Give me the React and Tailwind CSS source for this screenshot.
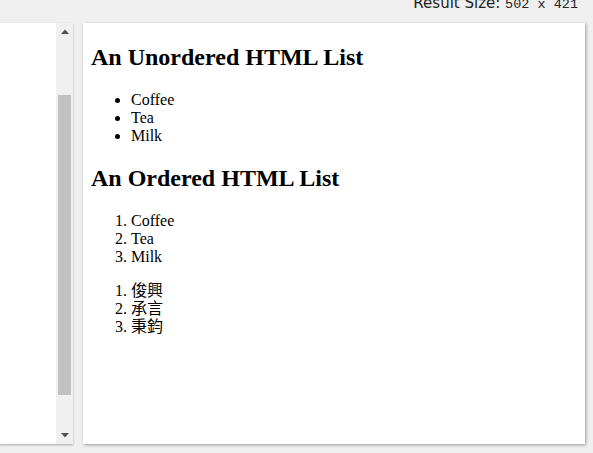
import React from 'react';

const serif = { fontFamily: '"Liberation Serif", "Noto Sans CJK TC", serif' };

const App = () => {
    return (
        <div className="w-[593px] h-[453px] bg-[#efefef] overflow-hidden flex flex-col">
            {/* top bar */}
            <div className="h-[23px] flex justify-end pr-[15px] overflow-hidden">
                <div className="-mt-[5px] text-[15px] leading-[16px] text-[#222] whitespace-pre" style={{ fontFamily: '"DejaVu Sans", sans-serif' }}>
                    Result Size: <span className="text-[13.5px]" style={{ fontFamily: '"Liberation Mono", monospace' }}>502 x 421</span>
                </div>
            </div>

            <div className="flex h-[421px]">
                {/* left editor pane */}
                <div className="w-[73px] h-full bg-white flex shadow-[0_1px_2px_rgba(0,0,0,0.3)]">
                    <div className="flex-1" />
                    <div className="w-[17px] h-full bg-[#f0f0f0] flex flex-col items-center">
                        <div className="h-[17px] flex items-center justify-center">
                            <svg width="8" height="5" viewBox="0 0 8 5"><path d="M0 5 L4 0.5 L8 5 Z" fill="#505050" /></svg>
                        </div>
                        <div className="h-[55px]" />
                        <div className="w-[13px] h-[300px] bg-[#c1c1c1]" />
                        <div className="flex-1" />
                        <div className="h-[17px] flex items-center justify-center">
                            <svg width="8" height="5" viewBox="0 0 8 5"><path d="M0 0 L8 0 L4 4.5 Z" fill="#505050" /></svg>
                        </div>
                    </div>
                </div>

                {/* result pane */}
                <div className="ml-[10px] w-[502px] h-full bg-white shadow-[1px_1px_3px_rgba(0,0,0,0.35)] px-2 pt-[0.1px] text-black" style={serif}>
                    <h2 className="text-[24px] font-bold leading-[27px] mt-[21px] mb-[19.92px]">An Unordered HTML List</h2>
                    <ul className="list-disc pl-10 my-4 text-[16px] leading-[18px]">
                        <li>Coffee</li>
                        <li>Tea</li>
                        <li>Milk</li>
                    </ul>

                    <h2 className="text-[24px] font-bold leading-[27px] mt-[19.92px] mb-[19.92px]">An Ordered HTML List</h2>
                    <ol className="list-decimal pl-10 my-4 text-[16px] leading-[18px]">
                        <li>Coffee</li>
                        <li>Tea</li>
                        <li>Milk</li>
                    </ol>
                    <ol className="list-decimal pl-10 my-4 text-[16px] leading-[18px]">
                        <li>俊興</li>
                        <li>承言</li>
                        <li>秉鈞</li>
                    </ol>
                </div>
            </div>
        </div>
    );
};

export default App;
